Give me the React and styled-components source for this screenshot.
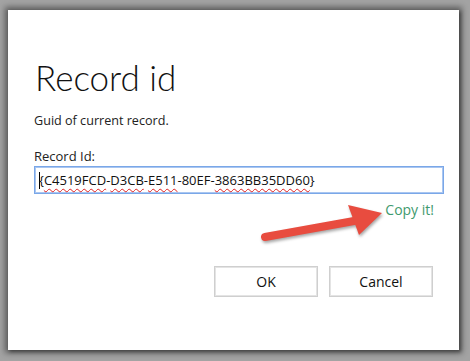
import React from 'react';
import styled, { createGlobalStyle } from 'styled-components';

const Global = createGlobalStyle`
  html, body {
    margin: 0;
    padding: 0;
    background: #a3a3a3;
    width: 470px;
    height: 361px;
    overflow: hidden;
  }
  body {
    font-family: "Open Sans", "Noto Sans", sans-serif;
  }
`;

const Page = styled.div`
  padding: 10px 0 0 8px;
`;

const Dialog = styled.div`
  position: relative;
  width: 451px;
  height: 340px;
  box-sizing: border-box;
  background: #fff;
  box-shadow: 0 0 6px 3px rgba(0, 0, 0, 0.45), 2px 2px 3px rgba(0, 0, 0, 0.3);
  padding: 44px 15px 0 26px;
  display: flex;
  flex-direction: column;
`;

const Title = styled.h1`
  margin: 0 0 0 1px;
  font-family: Lato, "Open Sans", sans-serif;
  font-size: 35px;
  font-weight: 300;
  line-height: 46px;
  color: #111;
`;

const Note = styled.p`
  margin: 12px 0 0;
  font-size: 12.6px;
  line-height: 18px;
  color: #222;
`;

const Label = styled.label`
  margin-top: 18px;
  font-size: 13px;
  line-height: 16px;
  color: #222;
`;

const Field = styled.div`
  margin-top: 2px;
  height: 28px;
  box-sizing: border-box;
  border: 1px solid #7aa7e8;
  box-shadow: inset 0 0 0 1px #a9c6f1;
  padding: 0 4px;
  display: flex;
  align-items: center;
  font-size: 13px;
  color: #111;
  white-space: nowrap;
`;

const Caret = styled.span`
  display: inline-block;
  width: 1px;
  height: 17px;
  background: #000;
  margin-right: -1px;
`;

const Word = styled.span`
  text-decoration: ${({ $bad }) => ($bad ? 'underline wavy #e02020' : 'none')};
  text-decoration-thickness: 1px;
  text-underline-offset: 3px;
`;

const CopyRow = styled.div`
  display: flex;
  justify-content: flex-end;
  padding-right: 10px;
  margin-top: 6px;
`;

const CopyLink = styled.a`
  font-size: 14px;
  line-height: 20px;
  color: #3f9a6e;
  cursor: pointer;
`;

const Buttons = styled.div`
  display: flex;
  justify-content: flex-end;
  gap: 11px;
  margin-top: 46px;
  padding-right: 11px;
`;

const Button = styled.button`
  width: 104px;
  height: 31px;
  box-sizing: border-box;
  background: #fff;
  border: 1px solid #cfcfcf;
  box-shadow: inset 0 0 0 1px #e4e4e4;
  font-family: "Open Sans", "Noto Sans", sans-serif;
  font-size: 14px;
  color: #111;
`;

const Arrow = styled.svg`
  position: absolute;
  left: 244px;
  top: 192px;
  overflow: visible;
  filter: drop-shadow(1px 2px 1.5px rgba(0, 0, 0, 0.35));
`;

export default function App() {
  return (
    <>
      <Global />
      <Page>
        <Dialog>
          <Title>Record id</Title>
          <Note>Guid of current record.</Note>
          <Label>Record Id:</Label>
          <Field>
            <Caret />
            <span>{'{'}</span>
            <Word $bad>C4519FCD</Word>-<Word $bad>D3CB</Word>-<Word $bad>E511</Word>-<Word>80EF</Word>-<Word $bad>3863BB35DD60</Word>
            <span>{'}'}</span>
          </Field>
          <CopyRow>
            <CopyLink>Copy it!</CopyLink>
          </CopyRow>
          <Buttons>
            <Button>OK</Button>
            <Button>Cancel</Button>
          </Buttons>
          <Arrow width="130" height="40" viewBox="0 0 130 40">
            <line x1="13" y1="35" x2="102" y2="19" stroke="#e84c3f" strokeWidth="8" strokeLinecap="round" />
            <polygon points="96,3 130,11 107,33" fill="#e84c3f" />
          </Arrow>
        </Dialog>
      </Page>
    </>
  );
}
